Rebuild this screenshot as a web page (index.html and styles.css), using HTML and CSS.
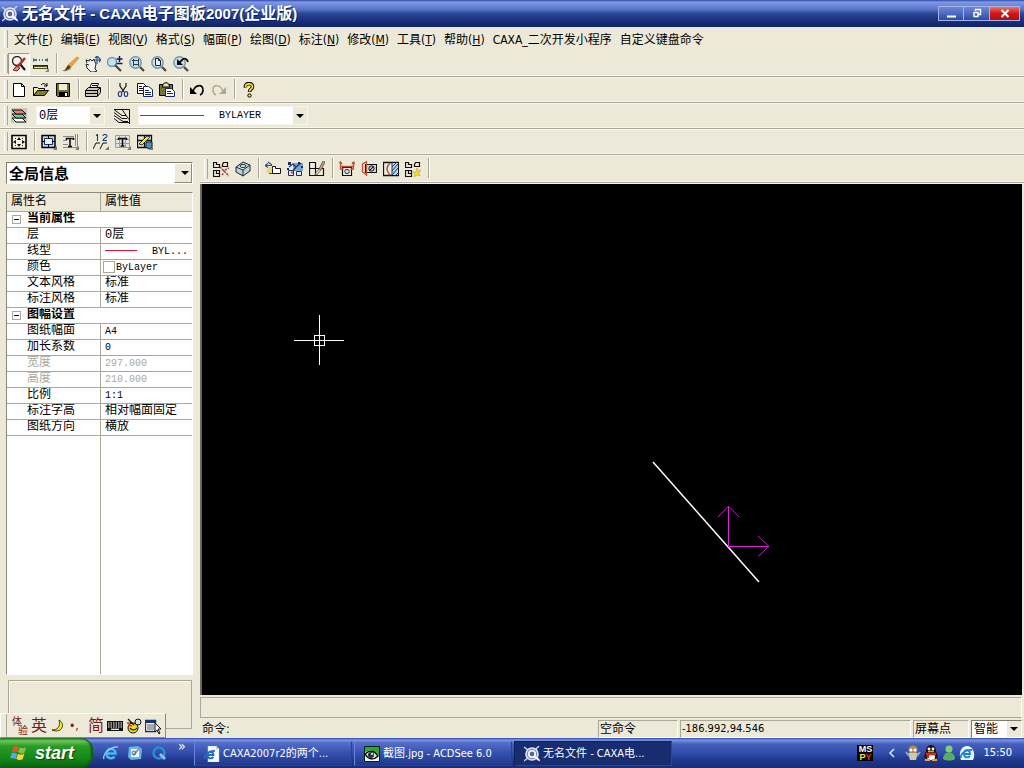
FILE: index.html
```html
<!DOCTYPE html>
<html lang="zh-CN">
<head>
<meta charset="utf-8">
<title>无名文件 - CAXA电子图板2007(企业版)</title>
<link rel="stylesheet" href="styles.css">
</head>
<body>
<svg class="sprite" aria-hidden="true">
  <symbol id="app" viewBox="0 0 16 16"><path d="M0 1l4 3M15 0l-4 4M0 15l4-3M12 12l4 3" stroke="#c5cdf0" stroke-width="1.500"/><circle cx="8" cy="8" r="6" fill="#7d88b8" stroke="#dfe4fa" stroke-width="1.600"/><circle cx="8" cy="8" r="3.200" fill="#54659f" stroke="#fff" stroke-width="1.600"/><path d="M10 10l5 4" stroke="#fff" stroke-width="2"/></symbol>
  <symbol id="redraw" viewBox="0 0 16 16"><circle cx="6" cy="5" r="4.500" fill="#f8f4ee" stroke="#222" stroke-width="1.300"/><path d="M9 8l5 6" stroke="#111" stroke-width="2"/><path d="M14 2L9 8l-5 5" stroke="#a3302a" stroke-width="2.500"/><path d="M2 14l4-4 3 2-3 3z" fill="#d68a80" stroke="#8a221c"/></symbol>
  <symbol id="measure" viewBox="0 0 16 16"><path d="M2 4h2M6 4h1M9 4h1M12 4h2" stroke="#18457c" stroke-width="1.500"/><path d="M0 2l3 2-3 2zM15 2l-3 2 3 2z" fill="#3a6fa5"/><path d="M0 9h15v4H0z" fill="#222"/><path d="M1 11.500h13" stroke="#f4ee2c" stroke-width="1.500"/><path d="M2 9v2M5 9v2M8 9v2M11 9v2" stroke="#333"/><path d="M16 12v4h-4z" fill="#8c8a7c"/></symbol>
  <symbol id="brush" viewBox="0 0 16 16"><path d="M14 1l2 1-8 9-3-2z" fill="#f2a33c" stroke="#c58434" stroke-width=".7"/><path d="M5 9l3 2-2 2-5 2 2-3z" fill="#5a3a22"/><path d="M0 14.500c4 1 5-1 8-2" stroke="#664" fill="none" stroke-width=".8"/></symbol>
  <symbol id="hand" viewBox="0 0 16 16"><path d="M2 7L1 4l3 1 1-2 2 2 2-2 1 3 1 2-1 5 2 2-3 1H6L2 12 1 8l3 1" fill="#f3f3ee" stroke="#222"/><path d="M12 0v8M8 4h8M12 0l-2 2m2-2l2 2m2 2l-2-2m2 2l-2 2" stroke="#26568a" stroke-width="1.200" fill="none"/></symbol>
  <symbol id="lens" viewBox="0 0 16 16"><circle cx="6.500" cy="6.500" r="5.700" fill="#c6dfec" stroke="#6e97b1" stroke-width="1.400"/><path d="M11 11l4 4" stroke="#444" stroke-width="2.200"/></symbol>
  <symbol id="zoompm" viewBox="0 0 16 16"><circle cx="5" cy="6" r="4.500" fill="#c6dfec" stroke="#6e97b1" stroke-width="1.400"/><path d="M8 9l6 6" stroke="#444" stroke-width="2.200"/><path d="M12.500 0v6M9.500 3h6M9.500 7.500h6" stroke="#151560" stroke-width="1.500"/></symbol>
  <symbol id="zoomwin" viewBox="0 0 16 16"><use href="#lens"/><path d="M4.500 4.500h5v4h-5zM3 4.500h1M4.500 3v7M9.500 3v7" fill="none" stroke="#2a3c4c"/></symbol>
  <symbol id="zoompage" viewBox="0 0 16 16"><use href="#lens"/><path d="M4.500 2.500h3l2 2v5h-5zM7.500 2.500v2h2" fill="#e4eef5" stroke="#222"/></symbol>
  <symbol id="zoomback" viewBox="0 0 16 16"><use href="#lens"/><path d="M4 3v6h6z" fill="#000"/><path d="M6 7l4-4c2-1 4 0 5 3" fill="none" stroke="#111" stroke-width="1.800"/></symbol>
  <symbol id="new" viewBox="0 0 16 16"><path d="M2.500 1.500h8l3 3v10h-11z" fill="#fff" stroke="#000"/><path d="M10.500 1.500v3h3" fill="none" stroke="#000"/></symbol>
  <symbol id="open" viewBox="0 0 16 16"><path d="M.5 13.500v-8h4l1 1h6v2" fill="#f3f0a0" stroke="#000"/><path d="M.5 13.500l4-5h11l-4 5z" fill="#83811d" stroke="#000"/><path d="M8 3c2-2 4-2 6 1m0-3v3h-3" fill="none" stroke="#000"/></symbol>
  <symbol id="save" viewBox="0 0 16 16"><path d="M1.500 1.500h13v13H2.500l-1-1z" fill="#6f7328" stroke="#000"/><path d="M4 2h8v6H4z" fill="#eeecda"/><path d="M4 10h9v5H4z" fill="#000"/><path d="M10 11h2v3h-2z" fill="#fff"/></symbol>
  <symbol id="print" viewBox="0 0 16 16"><path d="M4.500 6.500l2-5h7l-2 5" fill="#fff" stroke="#000"/><path d="M.5 8.500l3-3h12v5l-3 4H.5z" fill="#c9c8c0" stroke="#000"/><path d="M1 8.500h11l3-2.500M12.500 8v6M1 11.500h11M7 3.500h5M6 5.500h5" fill="none" stroke="#000"/><path d="M8 10h3" stroke="#c7a900"/></symbol>
  <symbol id="cut" viewBox="0 0 16 16"><path d="M5 1v3l4 6M11 1v3l-4 6" fill="none" stroke="#111" stroke-width="1.200"/><ellipse cx="5" cy="12" rx="1.700" ry="2.500" fill="none" stroke="#223b8c" stroke-width="1.200"/><ellipse cx="11" cy="12" rx="1.700" ry="2.500" fill="none" stroke="#223b8c" stroke-width="1.200"/></symbol>
  <symbol id="copy" viewBox="0 0 16 16"><path d="M.5 1.500h6l3 3v7h-9z" fill="#fff" stroke="#111"/><path d="M2 4.500h3M2 6.500h5M2 8.500h5" stroke="#111"/><path d="M6.500 4.500h5l4 3v7h-9z" fill="#fff" stroke="#15246c"/><path d="M8 8.500h4M8 10.500h6M8 12.500h6" stroke="#15246c"/></symbol>
  <symbol id="paste" viewBox="0 0 16 16"><path d="M.5 2.500h13v11H.5z" fill="#77743a" stroke="#000"/><path d="M4 3c0-3 6-3 6 0l1 2H3z" fill="#e5dfa0" stroke="#000"/><path d="M6.500 6.500h6l3 3v5h-9z" fill="#fff" stroke="#15246c"/><path d="M8 9.500h4M8 11.500h6" stroke="#15246c"/></symbol>
  <symbol id="undo" viewBox="0 0 16 16"><path d="M1 5v7h7z" fill="#000"/><path d="M4 9c3-7 10-7 10-1 0 2-1 4-3 5" fill="none" stroke="#000" stroke-width="1.600"/></symbol>
  <symbol id="redo" viewBox="0 0 16 16"><path d="M15 5v7H8z" fill="#aaa896"/><path d="M12 9C9 2 2 2 2 8c0 2 1 4 3 5" fill="none" stroke="#aaa896" stroke-width="1.500"/></symbol>
  <symbol id="help" viewBox="0 0 16 16"><path d="M4.500 5.500c-1-5 7-5 7-1 0 3-3 2-3 5.500" fill="none" stroke="#000" stroke-width="3.600"/><path d="M4.500 5c0-4 7-4 7-.5 0 3-3 2-3 5" fill="none" stroke="#f6e51e" stroke-width="1.800"/><circle cx="8.500" cy="13.500" r="1.700" fill="#f6e51e" stroke="#000"/></symbol>
  <symbol id="layers" viewBox="0 0 16 16"><path d="M0 0h16v15H0z" fill="#c8c7bc"/><path d="M1 10h10l4 4H5z" fill="#fff" stroke="#111"/><path d="M1 6h10l4 4H5z" fill="#6fcf9c" stroke="#111"/><path d="M1 2h10l4 4H5z" fill="#ee7a78" stroke="#111"/></symbol>
  <symbol id="layerline" viewBox="0 0 16 16"><path d="M0 1.500h8l7 10M0 1.500l8 6h4M0 4.500l8 6h5M0 7.500l9 6h5M0 10.500l5 4h10" fill="none" stroke="#111"/><path d="M8 1.500h7.500V16" fill="none" stroke="#111"/></symbol>
  <symbol id="frame4" viewBox="0 0 16 16"><path d="M1 1.500h14v13H1z" fill="#f5f3e8" stroke="#000" stroke-width="1.600"/><path d="M8 3l-2 3h4zM8 13l-2-3h4zM2 8l3-2v4zM14 8l-3-2v4z" fill="#111"/><path d="M4 4l1 1M12 4l-1 1M4 12l1-1M12 12l-1-1" stroke="#222"/></symbol>
  <symbol id="frame" viewBox="0 0 16 16"><path d="M1 1.500h13v12H1z" fill="#bfd3e5" stroke="#000" stroke-width="1.500"/><path d="M3.500 4.500h8v6h-8z" fill="#edf2f5" stroke="#15316a"/><path d="M7.500 2v3m0 5v3M1 7.500h3m7 0h3" stroke="#000"/><path d="M16 12v4h-4z" fill="#777"/></symbol>
  <symbol id="titleblk" viewBox="0 0 16 16"><path d="M0 2.500h11M14.500 0v14M0 13.500h14M12.500 0v12M0 6.500h4M0 10.500h5" fill="none" stroke="#888"/><path d="M3 4.500h8M7 4v8M5 12.500h4M3.500 4v2m7-2v2" stroke="#111" stroke-width="1.600"/><path d="M16 12v4h-4z" fill="#777"/></symbol>
  <symbol id="num12" viewBox="0 0 16 16"><path d="M3 1.500l1.500-1V7M10 2c0-2 4-2 4 0 0 2-4 2-4 4.500h4" fill="none" stroke="#173c7d" stroke-width="1.100"/><path d="M0 15l3-6h4M7 15l3-6h4" fill="none" stroke="#111"/><path d="M16 12v4h-4z" fill="#777"/></symbol>
  <symbol id="tabletxt" viewBox="0 0 16 16"><path d="M.5 1.500h14v12H.5zM.5 5.500h14M.5 9.500h14M4.500 1v12M10.500 1v12" fill="#e2e6e0" stroke="#98a0a4"/><path d="M3 4.500h9M7.500 4v8M5.500 12h4M3.500 4v2m8-2v2" stroke="#111" stroke-width="1.600"/><path d="M16 12v4h-4z" fill="#777"/></symbol>
  <symbol id="tableedit" viewBox="0 0 16 16"><path d="M.5 1.500h14v12H.5zM.5 6.500h14M7.500 1v12" fill="#e8e6d0" stroke="#111" stroke-width="1.300"/><path d="M2 10l8-8 3 1-8 8z" fill="#f7e622" stroke="#333"/><path d="M9 8h6v5l-3 2-3-2z" fill="#4d94bd" stroke="#123"/><path d="M16 12v4h-4z" fill="#777"/></symbol>
  <symbol id="blocks" viewBox="0 0 16 16"><path d="M.5 1.500h3v2h3v3h-6zM10.500 1.500h4v4h-5v-2zM.5 9.500h6v6h-6zM3.500 9.500v3h3" fill="#e9e7d8" stroke="#111" stroke-width="1.200"/></symbol>
  <symbol id="explode" viewBox="0 0 16 16"><use href="#blocks"/><path d="M7 6l9 9M9 14l2-2m1-3l4-2M10 9l2 2" stroke="#a33a34" stroke-width="1.500" stroke-dasharray="2 1"/></symbol>
  <symbol id="box3d" viewBox="0 0 16 16"><path d="M1 6l7-5 7 3v6l-7 5-7-4zM1 6l7 3 7-5M8 9v6" fill="#bdd2d4" stroke="#152b35"/><ellipse cx="8" cy="5" rx="3" ry="1.500" fill="#e6eeee" stroke="#152b35"/></symbol>
  <symbol id="move" viewBox="0 0 16 16"><path d="M1 9l6-5v8H2z" fill="#e8cf6d" opacity=".7"/><path d="M0 4.500h7M0 4.500l3-2M0 4.500l3 2M3 1l4 3M4 12.500h5" stroke="#2d5488" stroke-width="1.200"/><path d="M7.500 7.500v-2h3v2h5v5h-8z" fill="#fff" stroke="#111"/></symbol>
  <symbol id="blockpts" viewBox="0 0 16 16"><path d="M6 2h10v8H6z" fill="#7da3cd"/><path d="M1.500 9.500h5v5h-5zM9.500 10.500h5v4h-5z" fill="#dfe5ea" stroke="#1a2b60"/><path d="M2 6l4-3 3 3-3 4M9 6l5-4" fill="none" stroke="#1a3570" stroke-width="1.300"/><path d="M1 1h3v3H1zM11 1h2v2h-2zM14 5h2v2h-2zM0 7h2v2H0z" fill="#1a2b60"/><path d="M4 11l2 1" stroke="#c73a2a" stroke-width="1.500"/></symbol>
  <symbol id="blockbrush" viewBox="0 0 16 16"><path d="M.5 1.500h6v6h8v7H.5zM.5 7.500h6M6.500 7.500v7" fill="#efede0" stroke="#111" stroke-width="1.200"/><path d="M14 0l2 1-4 8-2-1z" fill="#c59c84" stroke="#765"/><path d="M10 8l2 1-4 5-2-1z" fill="#d8cdb8" stroke="#655" stroke-width=".7"/></symbol>
  <symbol id="part1" viewBox="0 0 16 16"><path d="M3.500 6.500h9v8h-9z" fill="#eee" stroke="#111" stroke-width="1.200"/><circle cx="8" cy="10.500" r="2.200" fill="#ddd" stroke="#333"/><path d="M1.500 1v7h3M14.500 1v7h-3M2 5.500h12M0 2l1.500-1L3 3M13 3l1.500-2L16 3" fill="none" stroke="#c34e30" stroke-width="1.300"/></symbol>
  <symbol id="part2" viewBox="0 0 16 16"><path d="M4.500 3.500h11v8h-11z" fill="#e3e2d9" stroke="#111" stroke-width="1.200"/><circle cx="10.500" cy="7.500" r="2.700" fill="#bbb" stroke="#111"/><path d="M8 10l5-5" stroke="#111"/><path d="M5 1L1.500 3v8L5 13.500M5.500 0v15" fill="none" stroke="#c34e30" stroke-width="1.300"/></symbol>
  <symbol id="hatch" viewBox="0 0 16 16"><path d="M.5 1.500h15v13H.5z" fill="#f3f1e6" stroke="#111" stroke-width="1.300"/><path d="M9 2h6v12H9z" fill="#bed2e2"/><path d="M9 6l4-4M9 10l6-7M9 14l6-7M13 14l2-2M9 2v12" stroke="#173c6d"/><path d="M7 2C3 6 3 10 7 14" fill="none" stroke="#c84834" stroke-width="1.500"/></symbol>
  <symbol id="blockstar" viewBox="0 0 16 16"><use href="#blocks"/><path d="M12 7l1 3 3-1-2 3 1 3-3-1-3 2 1-3-2-2h3z" fill="#f0df2b" stroke="#b39b19" stroke-width=".5"/></symbol>
  <symbol id="ie" viewBox="0 0 16 16"><path d="M3.500 8.500h9c0-6-9-6-9 0 0 5 6 6 8 3" fill="none" stroke="#4eb6f2" stroke-width="2.500"/><path d="M1 14C-1 9 8 1 15 2" fill="none" stroke="#8bd2fa" stroke-width="1.400"/></symbol>
  <symbol id="desk" viewBox="0 0 16 16"><path d="M2 2l9-1 4 3-1 10-10 1-3-3z" fill="#65b7e8"/><path d="M4 4h8v8H4z" fill="#f1f7fb"/><path d="M6 10l6-6" stroke="#be6c3f" stroke-width="1.500"/><circle cx="7" cy="8" r="2" fill="none" stroke="#1979b9"/></symbol>
  <symbol id="qt" viewBox="0 0 16 16"><circle cx="8" cy="8" r="5.500" fill="none" stroke="#2b8bd6" stroke-width="2.500"/><path d="M9 9l5 5" stroke="#7fc6f3" stroke-width="3"/></symbol>
  <symbol id="iepage" viewBox="0 0 16 16"><path d="M4 0h8l3 3v13H4z" fill="#f7faff" stroke="#b9c8da" stroke-width=".5"/><path d="M12 0v3h3" fill="#b9c8da"/><path d="M3.500 9h6c0-4-6-4-6 0 0 4 4 4 6 2M1 13C0 9 6 4 11 5" fill="none" stroke="#1e70bd" stroke-width="1.800"/></symbol>
  <symbol id="acd" viewBox="0 0 16 16"><path d="M.5.500h15v15H.5z" fill="#f5f5ed" stroke="#062010"/><path d="M1 1h14v9C11 3 6 4 1 6z" fill="#26a836"/><path d="M1 8c5-5 10-3 13 2-5 5-10 3-13-2z" fill="#dcead7" stroke="#000" stroke-width="1.300"/><circle cx="7" cy="9" r="3" fill="#234"/><circle cx="8" cy="8" r="1" fill="#fff"/></symbol>
  <symbol id="flag" viewBox="0 0 20 18"><path d="M4 2c3-1 4 0 6 1L8 8C6 7 5 7 2 8z" fill="#f05323"/><path d="M11 3c2 1 4 1 7 0l-2 6c-2 1-4 1-7-1z" fill="#82c341"/><path d="M2 9c2-1 4 0 6 1l-2 6c-2-1-3-2-6-1z" fill="#53a7f0"/><path d="M9 10c2 1 4 1 7 0l-2 6c-3 1-5 1-7-1z" fill="#ffd23a"/></symbol>
  <symbol id="moon" viewBox="0 0 16 16"><path d="M9 2c7 4 3 14-7 10 5 0 9-3 7-10z" fill="#f7e51e" stroke="#211a05" stroke-width=".8"/></symbol>
  <symbol id="keyb" viewBox="0 0 16 16"><path d="M0 3h16v10H0z" fill="#111"/><path d="M1 5h14M1 7h14M1 9h14" stroke="#fff" stroke-width="1.200" stroke-dasharray="1.500 1"/><path d="M4 11.300h8" stroke="#fff" stroke-width="1.200"/></symbol>
  <symbol id="imetool" viewBox="0 0 16 16"><circle cx="7" cy="10" r="5" fill="#f2d91f" stroke="#111"/><circle cx="12" cy="4" r="3" fill="#d5dfe2" stroke="#111"/><path d="M2 1l6 6M1 5h6M4 10c1 2 5 3 7 0" stroke="#111" stroke-width="1.200" fill="none"/><path d="M2 7l4 1" stroke="#f22" stroke-width="1.500"/></symbol>
  <symbol id="imemenu" viewBox="0 0 16 16"><path d="M.5 2.500h10v11H.5z" fill="#fff" stroke="#173178" stroke-width="1.400"/><path d="M1 4h10" stroke="#173178" stroke-width="2"/><path d="M2 7h7M2 9h7M2 11h7" stroke="#555"/><path d="M10 5v9l2-2 2 4 1-1-2-4h3z" fill="#fff" stroke="#111"/></symbol>
  <symbol id="bug" viewBox="0 0 16 16"><circle cx="8" cy="5" r="4.500" fill="#b08c55"/><path d="M3 8h10l-2 7H5z" fill="#c5cbb8"/><circle cx="6" cy="5" r="1.500" fill="#fff"/><circle cx="10" cy="5" r="1.500" fill="#fff"/><path d="M1 7l3 4M15 7l-3 4" stroke="#8ea4bf" stroke-width="2"/></symbol>
  <symbol id="qq" viewBox="0 0 16 16"><path d="M3 6c0-8 10-8 10 0l2 6-3 2H4l-3-2z" fill="#181410"/><ellipse cx="8" cy="12" rx="4" ry="3" fill="#fff"/><circle cx="6" cy="4" r="1.400" fill="#fff"/><circle cx="10" cy="4" r="1.400" fill="#fff"/><path d="M5 6.500h6" stroke="#f5a31a" stroke-width="1.500"/><path d="M2 15h5m2 0h5" stroke="#f5a31a" stroke-width="2"/><path d="M3 9h10M5 10v3" stroke="#df251c" stroke-width="2.500"/></symbol>
  <symbol id="msn" viewBox="0 0 16 16"><circle cx="8" cy="4" r="3.500" fill="#80ce7b"/><path d="M2 14c0-9 12-9 12 0-3 2-9 2-12 0z" fill="#57ad62"/></symbol>
  <symbol id="iecloud" viewBox="0 0 16 16"><path d="M2 15C-1 9 2 1 8 1s9 8 6 14z" fill="#e8f6ff"/><path d="M5 9h6c0-5-6-5-6 0 0 4 4 4 6 2M2 13C1 9 7 4 13 5" fill="none" stroke="#1b80ce" stroke-width="1.800"/></symbol>
</svg>

<div class="window">
  <header class="titlebar">
    <svg class="icon app-icon"><use href="#app"/></svg>
    <h1>无名文件<span class="latin"> - CAXA</span>电子图板<span class="latin">2007(</span>企业版<span class="latin">)</span></h1>
    <div class="caption">
      <button type="button" aria-label="最小化"><svg viewBox="0 0 24 13"><path d="M8 9.500h9" stroke="#fff" stroke-width="2"/></svg></button>
      <button type="button" aria-label="还原"><svg viewBox="0 0 24 13"><path d="M11 4V2.500h5v5h-2M9.500 5.500h4v4h-4zM9 5.500h5" fill="none" stroke="#fff" stroke-width="1.400"/></svg></button>
      <button type="button" class="close" aria-label="关闭"><svg viewBox="0 0 28 13"><path d="M11 3l7 7M18 3l-7 7" stroke="#fff" stroke-width="2"/></svg></button>
    </div>
  </header>

  <nav class="menubar">
    <button type="button">文件(<u>F</u>)</button><button type="button">编辑(<u>E</u>)</button><button type="button">视图(<u>V</u>)</button><button type="button">格式(<u>S</u>)</button><button type="button">幅面(<u>P</u>)</button><button type="button">绘图(<u>D</u>)</button><button type="button">标注(<u>N</u>)</button><button type="button">修改(<u>M</u>)</button><button type="button">工具(<u>T</u>)</button><button type="button">帮助(<u>H</u>)</button><button type="button">CAXA_二次开发小程序</button><button type="button">自定义键盘命令</button>
  </nav>

  <div class="toolbar">
    <button type="button" class="pressed" aria-label="重画"><svg class="icon"><use href="#redraw"/></svg></button>
    <button type="button" aria-label="测量"><svg class="icon"><use href="#measure"/></svg></button>
    <i class="sep"></i>
    <button type="button" aria-label="刷新"><svg class="icon"><use href="#brush"/></svg></button>
    <button type="button" aria-label="平移"><svg class="icon"><use href="#hand"/></svg></button>
    <button type="button" aria-label="动态缩放"><svg class="icon"><use href="#zoompm"/></svg></button>
    <button type="button" aria-label="窗口缩放"><svg class="icon"><use href="#zoomwin"/></svg></button>
    <button type="button" aria-label="显示全部"><svg class="icon"><use href="#zoompage"/></svg></button>
    <button type="button" aria-label="显示回溯"><svg class="icon"><use href="#zoomback"/></svg></button>
  </div>
  <div class="toolbar">
    <button type="button" aria-label="新建"><svg class="icon"><use href="#new"/></svg></button>
    <button type="button" aria-label="打开"><svg class="icon"><use href="#open"/></svg></button>
    <button type="button" aria-label="保存"><svg class="icon"><use href="#save"/></svg></button>
    <i class="sep"></i>
    <button type="button" aria-label="打印"><svg class="icon"><use href="#print"/></svg></button>
    <i class="sep"></i>
    <button type="button" aria-label="剪切"><svg class="icon"><use href="#cut"/></svg></button>
    <button type="button" aria-label="复制"><svg class="icon"><use href="#copy"/></svg></button>
    <button type="button" aria-label="粘贴"><svg class="icon"><use href="#paste"/></svg></button>
    <i class="sep"></i>
    <button type="button" aria-label="撤消"><svg class="icon"><use href="#undo"/></svg></button>
    <button type="button" aria-label="恢复"><svg class="icon"><use href="#redo"/></svg></button>
    <i class="sep"></i>
    <button type="button" aria-label="帮助"><svg class="icon"><use href="#help"/></svg></button>
  </div>
  <div class="toolbar">
    <button type="button" aria-label="层控制"><svg class="icon"><use href="#layers"/></svg></button>
    <div class="combo layer-combo"><select aria-label="图层"><option>0层</option></select></div>
    <button type="button" aria-label="线型"><svg class="icon"><use href="#layerline"/></svg></button>
    <div class="combo line-combo"><select aria-label="线型选择"><option>BYLAYER</option></select></div>
  </div>
  <div class="toolbar">
    <button type="button" aria-label="图幅设置"><svg class="icon"><use href="#frame4"/></svg></button>
    <i class="sep"></i>
    <button type="button" aria-label="图框"><svg class="icon"><use href="#frame"/></svg></button>
    <button type="button" aria-label="标题栏"><svg class="icon"><use href="#titleblk"/></svg></button>
    <i class="sep"></i>
    <button type="button" aria-label="序号"><svg class="icon"><use href="#num12"/></svg></button>
    <button type="button" aria-label="明细表"><svg class="icon"><use href="#tabletxt"/></svg></button>
    <button type="button" aria-label="表格编辑"><svg class="icon"><use href="#tableedit"/></svg></button>
  </div>

  <main class="workspace">
    <aside class="side">
      <div class="combo scope"><select aria-label="信息范围"><option>全局信息</option></select></div>
      <div class="props">
        <table>
          <thead><tr><th>属性名</th><th>属性值</th></tr></thead>
          <tbody>
            <tr class="group"><td colspan="2"><button type="button" aria-label="折叠"></button>当前属性</td></tr>
            <tr><td>层</td><td>0层</td></tr>
            <tr><td>线型</td><td class="ascii"><i class="line-sample"></i>BYL...</td></tr>
            <tr><td>颜色</td><td class="ascii swatch-cell"><i class="swatch"></i>ByLayer</td></tr>
            <tr><td>文本风格</td><td>标准</td></tr>
            <tr><td>标注风格</td><td>标准</td></tr>
            <tr class="group"><td colspan="2"><button type="button" aria-label="折叠"></button>图幅设置</td></tr>
            <tr><td>图纸幅面</td><td class="ascii">A4</td></tr>
            <tr><td>加长系数</td><td class="ascii">0</td></tr>
            <tr class="off"><td>宽度</td><td class="ascii">297.000</td></tr>
            <tr class="off"><td>高度</td><td class="ascii">210.000</td></tr>
            <tr><td>比例</td><td class="ascii">1:1</td></tr>
            <tr><td>标注字高</td><td>相对幅面固定</td></tr>
            <tr><td>图纸方向</td><td>横放</td></tr>
          </tbody>
        </table>
      </div>
      <div class="hint"></div>
    </aside>

    <section class="drawing">
      <div class="toolbar inner">
        <button type="button" aria-label="块打散"><svg class="icon"><use href="#explode"/></svg></button>
        <button type="button" aria-label="块消隐"><svg class="icon"><use href="#box3d"/></svg></button>
        <i class="sep"></i>
        <button type="button" aria-label="提取图符"><svg class="icon"><use href="#move"/></svg></button>
        <button type="button" aria-label="定义图符"><svg class="icon"><use href="#blockpts"/></svg></button>
        <button type="button" aria-label="编辑图符"><svg class="icon"><use href="#blockbrush"/></svg></button>
        <i class="sep"></i>
        <button type="button" aria-label="主视图"><svg class="icon"><use href="#part1"/></svg></button>
        <button type="button" aria-label="侧视图"><svg class="icon"><use href="#part2"/></svg></button>
        <button type="button" aria-label="剖视图"><svg class="icon"><use href="#hatch"/></svg></button>
        <button type="button" aria-label="更新"><svg class="icon"><use href="#blockstar"/></svg></button>
        <i class="sep"></i>
      </div>
      <div class="canvas">
        <svg width="820" height="511" viewBox="202 184 820 511">
          <g fill="none" stroke="#fff" shape-rendering="crispEdges"><path d="M294 340.500h50M319.500 315v50M314.500 335.500h10v10h-10z"/></g>
          <path d="M653 462l106 120" stroke="#fff" stroke-width="1.500"/>
          <path d="M728.500 547v-41M728 546.500h41" stroke="#e01ee0" fill="none"/>
          <path d="M718 517l10.500-11 10.500 11M758 536l11 10.500-11 10" stroke="#b428b4" fill="none"/>
        </svg>
      </div>
      <div class="options"></div>
      <div class="status">
        <span class="prompt">命令:</span>
        <span class="cell cmd">空命令</span>
        <span class="cell coords">-186.992,94.546</span>
        <span class="cell snap">屏幕点</span>
        <div class="combo smart"><select aria-label="捕捉方式"><option>智能</option></select></div>
      </div>
    </section>
  </main>

  <footer class="taskbar">
    <button type="button" class="start"><svg class="flag"><use href="#flag"/></svg>start</button>
    <div class="quick">
      <button type="button" aria-label="Internet Explorer"><svg class="icon"><use href="#ie"/></svg></button>
      <button type="button" aria-label="桌面"><svg class="icon"><use href="#desk"/></svg></button>
      <button type="button" aria-label="QuickTime"><svg class="icon"><use href="#qt"/></svg></button>
      <span class="more">»</span>
    </div>
    <div class="tasks">
      <button type="button"><svg class="icon"><use href="#iepage"/></svg>CAXA2007r2的两个...</button>
      <button type="button"><svg class="icon"><use href="#acd"/></svg>截图.jpg - ACDSee 6.0</button>
      <button type="button" class="active"><svg class="icon"><use href="#app"/></svg>无名文件 - CAXA电...</button>
    </div>
    <div class="tray">
      <span class="mspy"><b>MS</b><b><em>P</em><strong>Y</strong></b></span>
      <svg class="chev" viewBox="0 0 8 10"><path d="M6 1L2 5l4 4" fill="none" stroke="#dce6ff" stroke-width="1.500"/></svg>
      <svg class="icon"><use href="#bug"/></svg>
      <svg class="icon"><use href="#qq"/></svg>
      <svg class="icon"><use href="#msn"/></svg>
      <svg class="icon"><use href="#iecloud"/></svg>
      <time>15:50</time>
    </div>
  </footer>

  <div class="ime">
    <span class="try"><b>体</b><b>验</b></span>
    <span class="zh">英</span>
    <svg class="icon"><use href="#moon"/></svg>
    <span class="zh punct">•,</span>
    <span class="zh">简</span>
    <svg class="icon"><use href="#keyb"/></svg>
    <svg class="icon"><use href="#imetool"/></svg>
    <svg class="icon"><use href="#imemenu"/></svg>
  </div>
</div>
</body>
</html>
```
FILE: styles.css
```css
* { box-sizing: border-box; }
body {
  margin: 0;
  background: #ece9d8;
  color: #000;
  font: 12px/16px "DejaVu Sans Condensed", "Noto Sans CJK SC", sans-serif;
}
button, select {
  font: inherit;
  color: inherit;
  background: none;
  border: 0;
  padding: 0;
  margin: 0;
}
.sprite { display: none; }
.icon { width: 16px; height: 16px; flex: none; display: block; }
.window { position: relative; display: flex; flex-direction: column; height: 100vh; overflow: hidden; }

.titlebar {
  flex: none;
  display: flex;
  align-items: center;
  height: 27px;
  padding: 0 4px 0 2px;
  color: #fff;
  background: linear-gradient(#2c4cac 0, #8298e4 2px, #5470c4 10px, #2c4c9c 13px, #1c3884 18px, #102468 26px);
}
.titlebar h1 {
  flex: 1;
  margin: 0 0 0 4px;
  font: bold 16px/24px "Liberation Sans", "Noto Sans CJK SC", sans-serif;
  text-shadow: 1px 1px #0c1c50;
  white-space: pre;
}
.latin { font-size: 15px; }
.caption { display: flex; }
.caption button {
  width: 26px;
  height: 15px;
  border: 1px solid #a4b4e8;
  background: linear-gradient(#6c88d8, #2c4ca4);
}
.caption button + button { border-left: 0; }
.caption button svg { display: block; width: 100%; height: 13px; }
.caption .close { width: 30px; background: linear-gradient(#f07060, #d01818 50%, #b01010); }

.menubar { flex: none; position: relative; display: flex; align-items: center; height: 24px; padding: 2px 10px 0; }
.menubar button { padding: 0 4px; white-space: nowrap; }

.menubar::before, .toolbar::before {
  content: "";
  position: absolute;
  left: 4px;
  top: 3px;
  bottom: 3px;
  width: 2px;
  border-left: 1px solid #fff;
  border-right: 1px solid #aca899;
}
.toolbar {
  flex: none;
  position: relative;
  display: flex;
  align-items: center;
  height: 26px;
  padding-left: 8px;
  border-bottom: 1px solid #aca899;
  box-shadow: inset 0 -1px #f8f6ec, 0 1px #f8f6ec;
}
.toolbar button { flex: none; width: 22px; height: 22px; display: grid; place-items: center; }
.toolbar .pressed { border: 1px solid; border-color: #9c9a8c #fff #fff #9c9a8c; background: #f5f3ea; }
.sep {
  flex: none;
  width: 8px;
  align-self: stretch;
  background: linear-gradient(90deg, #aca899 1px, #fff 1px) 4px 2px / 2px 20px no-repeat;
}

.combo { position: relative; flex: none; background: #fff; }
.combo select { display: block; width: 100%; height: 100%; appearance: none; outline: 0; }
.combo::after {
  content: "";
  position: absolute;
  right: 0;
  top: 0;
  bottom: 0;
  width: 14px;
  pointer-events: none;
  background: #ece9d8;
}
.combo::before {
  content: "";
  position: absolute;
  z-index: 1;
  right: 3px;
  top: calc(50% - 2px);
  border: 4px solid transparent;
  border-top-color: #000;
  border-bottom: 0;
  pointer-events: none;
}
.layer-combo { width: 69px; height: 19px; margin: 0 6px; border: 1px solid #f8f6ec; }
.layer-combo select { padding-left: 2px; font-family: "Liberation Mono", "Noto Sans CJK SC", monospace; }
.line-combo {
  width: 170px;
  height: 19px;
  margin-left: 5px;
  border: 1px solid #f8f6ec;
  background: linear-gradient(#e01030, #e01030) 1px 8px / 64px 1px no-repeat #fff;
}
.line-combo select { padding-left: 80px; font: 10px "Liberation Mono", monospace; }

.workspace { flex: 1; min-height: 0; display: flex; }
.side {
  flex: none;
  display: flex;
  flex-direction: column;
  width: 200px;
  padding: 6px 7px 9px 6px;
  border-top: 1px solid #f8f6ec;
}
.scope { height: 22px; border: 1px solid; border-color: #7c7a6c #fff #fff #7c7a6c; }
.scope select { padding-left: 2px; font: bold 15px/20px "Noto Sans CJK SC", sans-serif; }
.scope::after { width: 16px; border: 1px solid; border-color: #fff #8c8a7c #8c8a7c #fff; }
.props {
  flex: 1;
  min-height: 0;
  margin-top: 8px;
  border: 1px solid;
  border-color: #8c8a7c #fff #fff #8c8a7c;
  background: linear-gradient(#aca899, #aca899) 93px 0 / 1px 100% no-repeat #fff;
}
.props table { width: 100%; border-collapse: separate; border-spacing: 0; table-layout: fixed; font: 12px/15px "Liberation Mono", "Noto Sans CJK SC", monospace; }
.props th { width: 94px; height: 19px; padding: 1px 0 0 4px; text-align: left; font-weight: normal; background: #ece9d8; border-right: 1px solid #aca899; border-bottom: 1px solid #aca899; }
.props th + th { width: auto; border-right: 0; }
.props td { height: 16px; padding: 0 0 0 20px; line-height: 15px; white-space: nowrap; overflow: hidden; border-bottom: 1px solid #aca899; border-right: 1px solid #aca899; }
.props td + td { padding-left: 4px; border-right: 0; }
.props .ascii { font-size: 10px; }
.props .group td { padding-left: 5px; font-weight: bold; border-right: 0; background: #fff; }
.group button {
  width: 9px;
  height: 9px;
  margin-right: 6px;
  vertical-align: -1px;
  border: 1px solid #aca899;
  background: linear-gradient(#000, #000) center / 5px 1px no-repeat;
}
.off { color: #aca899; }
.line-sample { display: inline-block; width: 32px; height: 1px; margin-right: 15px; vertical-align: 3px; background: #e01030; }
.props td.swatch-cell { padding-left: 2px; }
.swatch { display: inline-block; width: 12px; height: 12px; margin-right: 1px; vertical-align: -3px; border: 1px solid #aca899; }
.hint { flex: none; height: 49px; margin: 5px 1px 0 2px; border: 1px solid #aca899; box-shadow: inset 1px 1px #f8f6ec; }

.drawing { flex: 1; min-width: 0; display: flex; flex-direction: column; border-top: 1px solid #8c8a7c; }
.inner { height: 27px; padding-left: 10px; }
.canvas { flex: 1; min-height: 0; margin-right: 2px; overflow: hidden; background: #000; border: 1px solid #6c6a5c; border-width: 1px 0 0 2px; }
.canvas svg { display: block; }
.options { flex: none; height: 21px; margin: 2px 2px 2px 0; border: 1px solid #aca899; border-right-color: #fff; }
.status { flex: none; display: flex; height: 18px; gap: 2px; padding-right: 2px; line-height: 18px; }
.prompt { flex: 1; padding-left: 2px; }
.cell { flex: none; padding-left: 1px; border: 1px solid; border-color: #aca899 #fff #fff #aca899; line-height: 16px; }
.cmd { width: 80px; }
.coords { width: 231px; font-size: 11px; }
.snap { width: 56px; }
.smart { width: 51px; border: 1px solid; border-color: #7c7a6c #fff #fff #7c7a6c; }
.smart select { padding-left: 2px; line-height: 16px; }

.taskbar {
  flex: none;
  display: flex;
  align-items: stretch;
  height: 30px;
  color: #fff;
  font-size: 11px;
  background: linear-gradient(#2848b0 0, #7c94e0 2px, #4460bc 6px, #3450ac 14px, #20388c 22px, #182c78 30px);
}
.start {
  display: flex;
  align-items: center;
  gap: 7px;
  width: 93px;
  padding-left: 10px;
  border-radius: 0 12px 12px 0;
  font: italic bold 18px/28px "Liberation Sans", sans-serif;
  text-shadow: 1px 1px 1px #144008;
  background: linear-gradient(#287820 0, #68c858 3px, #2c9c28 8px, #148818 20px, #0c6010 30px);
  box-shadow: inset -2px 0 2px #0c5810;
}
.flag { width: 18px; height: 18px; }
.quick { display: flex; align-items: center; gap: 8px; width: 101px; padding-left: 10px; }
.more { align-self: flex-start; margin-left: 3px; font-size: 14px; }
.tasks { flex: 1; min-width: 0; display: flex; gap: 2px; padding: 3px 0 2px; }
.tasks button {
  display: flex;
  align-items: center;
  gap: 3px;
  flex: 0 1 158px;
  min-width: 0;
  padding-left: 9px;
  white-space: nowrap;
  overflow: hidden;
  border: 1px solid #2440a0;
  border-left-color: #6884dc;
  border-top-color: #6884dc;
  background: linear-gradient(#5470cc, #3450ac 50%, #20388c);
}
.tasks .active { background: #182c70; border-color: #101f58 #2844a0 #2844a0 #101f58; }
.tray { display: flex; align-items: center; gap: 2px; padding-right: 12px; }
.mspy { display: grid; width: 16px; height: 16px; margin-right: 13px; background: #000; font: bold 9px/8px "Liberation Sans", sans-serif; text-align: center; }
.mspy em { color: #f8e820; font-style: normal; }
.mspy strong { color: #f03020; }
.chev { width: 8px; height: 10px; margin-right: 7px; }
.tray time { margin-left: 6px; }

.ime {
  position: absolute;
  left: 0;
  bottom: 30px;
  display: flex;
  align-items: center;
  gap: 3px;
  width: 166px;
  height: 25px;
  padding-left: 11px;
  background: #ece9d8;
  border: 1px solid;
  border-color: #fff #8c8a7c #8c8a7c #fff;
  box-shadow: inset 5px 0 #ece9d8, inset 6px 0 #aca899;
  color: #7c1818;
}
.zh { font-size: 16px; width: 16px; white-space: nowrap; }
.punct { font-size: 12px; }
.try { display: grid; width: 16px; font-size: 10px; line-height: 9px; }
.try b { font-weight: normal; }
.try b + b { text-align: right; }
```
